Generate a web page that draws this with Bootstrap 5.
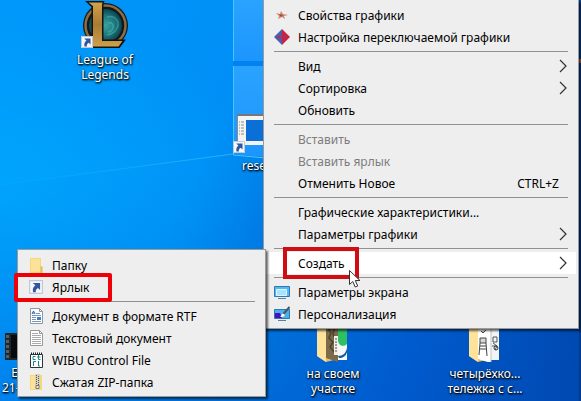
<!DOCTYPE html>
<html lang="ru">
<head>
<meta charset="utf-8">
<meta name="viewport" content="width=device-width, initial-scale=1">
<title>Рабочий стол</title>
<link href="https://cdn.jsdelivr.net/npm/bootstrap@5.3.0/dist/css/bootstrap.min.css" rel="stylesheet">
<style>
body{font-family:"Noto Sans","Open Sans",sans-serif;font-size:12px;line-height:15px;color:#000}
.desktop{background:
 radial-gradient(ellipse 260px 200px at 0 200px,#00a6fc 0,#00a6fc00 100%),
 linear-gradient(115deg,#0098fb 0%,#008ff6 36%,#0074da 56%,#0058c8 75%,#003c9c 100%)}
.beams{inset:0;width:100%;height:100%}
.shortcut{width:82px;color:#fff;text-shadow:0 1px 2px #000,1px 1px 2px #000;text-decoration:none}
.shortcut:hover{color:#fff}
.at-league{left:64px;top:0}
.at-reset{left:229px;top:110px}
.reset-name{margin-left:13px}
.at-video{left:2px;top:330px;width:24px}
.at-plot{left:292px;top:314px}
.at-cart{left:444px;top:314px}
.popup{background:#eee;border:1px solid #9a9a9a;padding:3px 2px;box-shadow:2px 2px 2px #0009}
.popup-main{left:263px;right:2px;top:0;border-top:0;padding-top:4px}
.popup-new{left:17px;top:249px;width:249px;padding-top:4px}
.entry{height:22px;border:0;background:none;color:#000;padding:0 9px 0 8px;white-space:nowrap;text-align:left}
.entry:disabled{color:#7d7d7d}
.entry.opened,.entry:hover:enabled{background:#fff}
.slot{width:16px;height:16px;margin-right:8px;flex:none}
.keys{margin-right:8px}
.divider{height:1px;margin:3px 8px;background:#919191;border:0;opacity:1}
.marker{border:4px solid #cf0d12;pointer-events:none}
.marker-create{left:283px;top:247px;width:76px;height:32px}
.marker-link{left:14px;top:273px;width:98px;height:29px;border-color:#ee0008;border-radius:2px}
.pointer{left:348px;top:269px;pointer-events:none}
</style>
<script src="https://cdn.jsdelivr.net/npm/bootstrap@5.3.0/dist/js/bootstrap.bundle.min.js"></script>
</head>
<body>
<svg class="d-none" aria-hidden="true">
 <symbol id="chevron" viewBox="0 0 8 14"><path d="M1 1l6 6-6 6" fill="none" stroke="#333" stroke-width="1.2"/></symbol>
 <symbol id="arrow" viewBox="0 0 12 12"><path d="M0 0h12v12H0z" fill="#f4f6fa"/><path d="M.5.5h11v11H.5z" fill="none" stroke="#c3c9d4"/><path d="M3.200 2.500H9.500v6L7.700 6.800C6 7.800 5.600 9 5.800 10.500H3.500C2.800 7.500 3.800 5.700 5.500 4.400z" fill="#2f569f"/></symbol>
</svg>
<main class="desktop position-relative vh-100 overflow-hidden">
 <svg class="beams position-absolute" viewBox="0 0 581 401" preserveAspectRatio="none" aria-hidden="true">
  <defs>
   <linearGradient id="pane" x1="0" y1="0" x2="0" y2="1"><stop offset="0" stop-color="#2aa2ff"/><stop offset="1" stop-color="#1c96fd"/></linearGradient>
   <linearGradient id="ray" x1="0" y1="0" x2="1" y2="0"><stop offset="0" stop-color="#1cb0ff" stop-opacity=".1"/><stop offset="1" stop-color="#35c0ff" stop-opacity=".7"/></linearGradient>
   <linearGradient id="dusk" x1="0" y1="0" x2="0" y2="1"><stop offset="0" stop-color="#006be4" stop-opacity="0"/><stop offset="1" stop-color="#0060d8" stop-opacity=".35"/></linearGradient>
  </defs>
  <path d="M0 185L233 154 581 190V401H0z" fill="url(#dusk)"/>
  <path d="M0 185L233 154" stroke="url(#ray)"/>
  <path d="M233 61h32v5h-32z" fill="#0083ee"/>
  <path d="M233 0h32v61h-32z" fill="url(#pane)"/>
  <path d="M233 66h32v91l-32-3z" fill="url(#pane)"/>
  <path d="M233.500 0v61M233.500 66v89l32 3" fill="none" stroke="#45c6ff"/>
  <path d="M579 0h2v401h-2z" fill="#062c6c" fill-opacity=".5"/>
  <path d="M579 59h2v4h-2z" fill="#b97452"/>
 </svg>

 <a class="shortcut at-league position-absolute text-center" href="#">
  <svg class="d-block mx-auto mb-1" width="48" height="48" viewBox="0 0 48 48" aria-hidden="true">
   <defs><linearGradient id="gold" x1="0" y1="0" x2="0" y2="1"><stop offset="0" stop-color="#d3a24a"/><stop offset=".5" stop-color="#a87a33"/><stop offset="1" stop-color="#cda04c"/></linearGradient>
   <radialGradient id="teal"><stop offset="0" stop-color="#38a39f"/><stop offset=".6" stop-color="#1d777e"/><stop offset="1" stop-color="#0d454f"/></radialGradient></defs>
   <circle cx="24.500" cy="25.500" r="22.500" fill="#101a1d"/>
   <circle cx="24.500" cy="25.500" r="20" fill="none" stroke="#8d6c40" stroke-width="2.500"/>
   <circle cx="24.500" cy="25.500" r="16.500" fill="url(#teal)"/>
   <path d="M26 17c7-2 12 3 11 9-1 4-5 8-11 9M27 23c4-1 6 2 5 5s-3 4-5 4" fill="none" stroke="#5cc0b8" stroke-opacity=".45" stroke-width="1.500"/>
   <path d="M4 1h19.500l-1 3v35.500H45L38.500 48H7l3.500-6V7z" fill="#15120e"/>
   <path d="M7.500 2.500h14l-.500 2.500v36h20.500L37.500 46.500H9.500l2.500-5V6z" fill="url(#gold)"/>
   <use href="#arrow" x="0" y="36" width="12" height="12"/>
  </svg>
  League of<br>Legends
 </a>

 <a class="shortcut at-reset position-absolute" href="#">
  <svg class="d-block ms-1" width="66" height="48" viewBox="0 0 66 48" aria-hidden="true">
   <path d="M4 5h58v30H4z" fill="#f3f3f3"/><path d="M4 4h58v2H4z" fill="#777"/>
   <path d="M4.500 6v28" stroke="#8a8a8a"/><path d="M13 10h44v21H13z" fill="#0a6fd6"/>
   <path d="M6 12h5M6 15h5M6 18h5M6 21h5M6 24h5" stroke="#8b8b8b" stroke-dasharray="1 1 3 0"/>
   <use href="#arrow" x="0" y="31" width="12" height="12"/>
  </svg>
  <span class="reset-name">reset</span>
 </a>

 <a class="shortcut at-video position-absolute text-end" href="#">
  <svg class="d-block" width="20" height="35" viewBox="-3 0 20 35" aria-hidden="true">
   <path d="M0 3h20v27H0z" fill="#202629"/><path d="M6 5h14v23H6z" fill="#080b0d"/>
   <path d="M2.500 5v24" stroke="#516068" stroke-width="3" stroke-dasharray="3 2"/>
  </svg>
  <span class="d-block me-2">E</span><span class="d-block text-start">21-</span>
 </a>

 <a class="shortcut at-plot position-absolute text-center" href="#">
  <svg class="d-block mx-auto mb-1" width="34" height="48" viewBox="0 0 34 48" aria-hidden="true">
   <path d="M1 6h17v40L10 48 1 42z" fill="#e5bd62"/><path d="M1 5l9 5v38l-9-6z" fill="#ffe39a"/>
   <path d="M10 9l12-2v41l-12-4z" fill="#7b6b4b"/><path d="M12 14l3 5-2 5 4 4-3 5 5 6M19 12l-2 8 3 8" fill="none" stroke="#4d4330" stroke-width="1.500"/>
   <path d="M22 7h9v39h-9z" fill="#f5f8fb"/><path d="M31 8v22c-4 4-9 1-9-4V10z" fill="#2fc064"/><path d="M18 22h4v19h-4z" fill="#f2efe4"/>
   <path d="M22 42c5 0 8-3 9-8v4c-1 4-4 6-8 6z" fill="#1c5590"/><path d="M20 24v14" stroke="#555" stroke-dasharray="2 1"/>
  </svg>
  на своем<br>участке
 </a>

 <a class="shortcut at-cart position-absolute text-center" href="#">
  <svg class="d-block mx-auto mb-1" width="34" height="48" viewBox="0 0 34 48" aria-hidden="true">
   <path d="M1 6h17v40L10 48 1 42z" fill="#e5bd62"/><path d="M1 5l9 5v38l-9-6z" fill="#ffe39a"/>
   <path d="M10 10l13-2v41l-13-4z" fill="#fff"/><path d="M23 7h8v39h-8z" fill="#f2f4f6"/><path d="M23 10v38" stroke="#bcc4cc"/>
   <path d="M12 24h6v5h-6zM12 29l-1 12M18 29l1 13M12 32h6M12 35h6M13 17l2 2 3-3" fill="#8885" stroke="#444"/>
   <path d="M25 23h4v5h-4zM25 29l4 3-2 4M24 32h5" fill="none" stroke="#555"/><circle cx="28" cy="34" r="2" fill="none" stroke="#333"/>
  </svg>
  четырёхко...<br>тележка с с...
 </a>

 <nav class="popup popup-main position-absolute d-flex flex-column" aria-label="Меню рабочего стола">
  <button class="entry d-flex align-items-center"><svg class="slot" viewBox="0 0 16 16"><path d="M2 6l4 1 1-3 2 3 5 1-4 1 1 3-3-2-4 2 1-3z" fill="#d08a72"/><path d="M5 7l4 1-2 2z" fill="#96483a"/></svg>Свойства графики</button>
  <button class="entry d-flex align-items-center"><svg class="slot" viewBox="0 0 16 16"><path d="M8 0v16L0 8z" fill="#3a66bd"/><path d="M8 0l8 8-8 8z" fill="#cf1f3c"/><path d="M3 8h10M8 3v10M5 6l-2 2 2 2M11 6l2 2-2 2" stroke="#a9355f" fill="none" stroke-width="1.300"/></svg>Настройка переключаемой графики</button>
  <hr class="divider">
  <button class="entry d-flex align-items-center"><span class="slot"></span>Вид<svg class="ms-auto" width="8" height="14"><use href="#chevron"/></svg></button>
  <button class="entry d-flex align-items-center"><span class="slot"></span>Сортировка<svg class="ms-auto" width="8" height="14"><use href="#chevron"/></svg></button>
  <button class="entry d-flex align-items-center"><span class="slot"></span>Обновить</button>
  <hr class="divider">
  <button class="entry d-flex align-items-center" disabled><span class="slot"></span>Вставить</button>
  <button class="entry d-flex align-items-center" disabled><span class="slot"></span>Вставить ярлык</button>
  <button class="entry d-flex align-items-center"><span class="slot"></span>Отменить Новое<span class="keys ms-auto">CTRL+Z</span></button>
  <hr class="divider">
  <button class="entry d-flex align-items-center"><span class="slot"></span>Графические характеристики...</button>
  <button class="entry d-flex align-items-center"><span class="slot"></span>Параметры графики<svg class="ms-auto" width="8" height="14"><use href="#chevron"/></svg></button>
  <hr class="divider">
  <button class="entry opened d-flex align-items-center" aria-expanded="true"><span class="slot"></span>Создать<svg class="ms-auto" width="8" height="14"><use href="#chevron"/></svg></button>
  <hr class="divider">
  <button class="entry d-flex align-items-center"><svg class="slot" viewBox="0 0 16 16"><path d="M.5 2.500h15v10H.5z" fill="#55b8ee" stroke="#2d79b5"/><path d="M2.500 5.500h10v6h-10z" fill="#a8e4fb" stroke="#d9f5ff"/><path d="M4 14.500h8" stroke="#5b7f9c"/></svg>Параметры экрана</button>
  <button class="entry d-flex align-items-center"><svg class="slot" viewBox="0 0 16 16"><path d="M.5 3.500h15v9H.5z" fill="#49b0ea" stroke="#2d79b5"/><path d="M1 7h5l2 5H1z" fill="#4a0fc0"/><path d="M15.500 1L9 8.500" stroke="#4c5560" stroke-width="2"/><path d="M9 7.500l2 1.500c-1 2-3 2-5 2 2-1 1-3 3-3.500z" fill="#fff"/><path d="M4 14.500h8" stroke="#5b7f9c"/></svg>Персонализация</button>
 </nav>

 <nav class="popup popup-new position-absolute d-flex flex-column" aria-label="Создать">
  <button class="entry d-flex align-items-center"><svg class="slot" viewBox="0 0 16 16"><path d="M2 1h11v8l1 1v6H2z" fill="#f6d77c"/><path d="M3 2h9v13H3z" fill="#fbe298"/><path d="M12.500 9.500h2V16h-2z" fill="#e5bb52"/></svg>Папку</button>
  <button class="entry d-flex align-items-center"><svg class="slot" viewBox="0 0 16 16"><use href="#arrow" x="1" y="1" width="14" height="14"/></svg>Ярлык</button>
  <hr class="divider">
  <button class="entry d-flex align-items-center"><svg class="slot" viewBox="0 0 16 16"><path d="M2.500.5h9l3 3v12h-12z" fill="#fff" stroke="#8a98a8"/><path d="M11.500.5v3h3" fill="none" stroke="#8a98a8"/><path d="M4 6l1.500-3L7 6M4.500 5h2" fill="none" stroke="#2e63ae"/><path d="M8 5.500h4M4 7.500h9M4 9.500h4M4 11.500h4M4 13.500h9" stroke="#7e94b5"/><path d="M9 9h4v3H9z" fill="#3d7fc4"/></svg>Документ в формате RTF</button>
  <button class="entry d-flex align-items-center"><svg class="slot" viewBox="0 0 16 16"><path d="M2.500.5h9l3 3v12h-12z" fill="#fff" stroke="#999"/><path d="M11.500.5v3h3" fill="none" stroke="#999"/><path d="M4 3.500h6M4 5.500h9M4 7.500h9M4 9.500h9M4 11.500h9M4 13.500h9" stroke="#aaa"/></svg>Текстовый документ</button>
  <button class="entry d-flex align-items-center"><svg class="slot" viewBox="0 0 16 16"><path d="M2.500 2.500h12v13h-12z" fill="#fff" stroke="#333"/><path d="M3 1.500h12" stroke="#222" stroke-width="2" stroke-dasharray="1 1"/><path d="M7.500 4.500H5v3h2.500M10.500 3v4.500h2M9 5h3.500M5.500 14V9.500H8M10.500 9v5h1.500" fill="none" stroke="#148a92"/></svg>WIBU Control File</button>
  <button class="entry d-flex align-items-center"><svg class="slot" viewBox="0 0 16 16"><path d="M2 1h12v15H2z" fill="#f6d77c"/><path d="M3 2h4v13H3z" fill="#fbe298"/><path d="M7 0h5v15H7z" fill="#d9d2b8"/><path d="M8.500 1v10M10.500 2v9" stroke="#555" stroke-dasharray="1 1"/><path d="M8 11.500h3v3H8z" fill="#eee" stroke="#777"/></svg>Сжатая ZIP-папка</button>
 </nav>

 <div class="marker marker-create position-absolute"></div>
 <div class="marker marker-link position-absolute"></div>
 <svg class="pointer position-absolute" width="14" height="20" viewBox="0 0 14 20" aria-hidden="true"><path d="M1.500 1.500v14l3.300-3 2.400 5.500 2.500-1-2.400-5.500h4.700z" fill="#fff" stroke="#333"/></svg>
</main>
</body>
</html>
